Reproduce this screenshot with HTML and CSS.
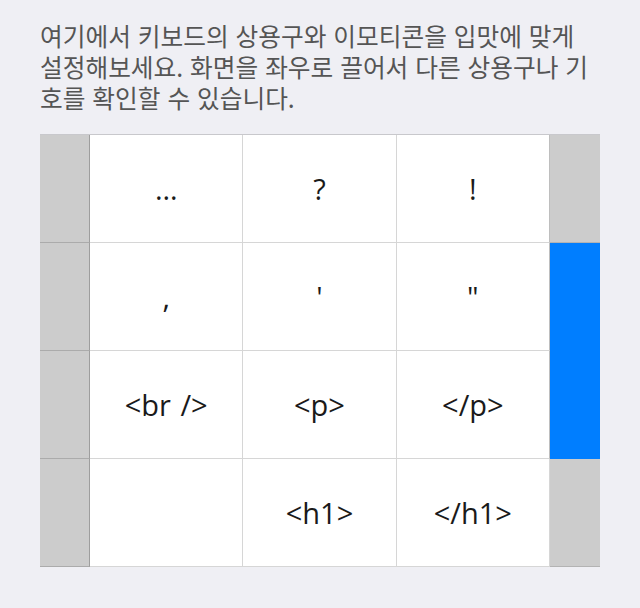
FILE: index.html
```html
<!DOCTYPE html>
<html lang="ko">
<head>
<meta charset="utf-8">
<link rel="stylesheet" href="styles.css">
</head>
<body>
<main class="page">
  <p class="intro">여기에서 키보드의 상용구와 이모티콘을 입맛에 맞게 설정해보세요. 화면을 좌우로 끌어서 다른 상용구나 기호를 확인할 수 있습니다.</p>
  <div class="board">
    <div class="cell side r1"></div>
    <div class="cell key">…</div>
    <div class="cell key">?</div>
    <div class="cell key">!</div>
    <div class="bar gray r1"></div>

    <div class="cell side r2"></div>
    <div class="cell key">,</div>
    <div class="cell key">'</div>
    <div class="cell key">"</div>
    <div class="bar blue"></div>

    <div class="cell side r3"></div>
    <div class="cell key">&lt;br /&gt;</div>
    <div class="cell key">&lt;p&gt;</div>
    <div class="cell key">&lt;/p&gt;</div>

    <div class="cell side r4"></div>
    <div class="cell key"></div>
    <div class="cell key">&lt;h1&gt;</div>
    <div class="cell key">&lt;/h1&gt;</div>
    <div class="bar gray r4"></div>
  </div>
</main>
</body>
</html>
```

FILE: styles.css
```css
* { box-sizing: border-box; }
html, body {
  margin: 0;
  padding: 0;
  background: #efeff4;
}
.page {
  padding: 20px 40px 0 40px;
}
.intro {
  margin: 0 8px 21px 0;
  font-family: "Noto Sans CJK KR", "Noto Sans", sans-serif;
  font-size: 24.7px;
  line-height: 31px;
  color: #555555;
}
.board {
  display: grid;
  grid-template-columns: 50px 1fr 1fr 1fr 50px;
  grid-template-rows: repeat(4, 108px);
  border-top: 1px solid rgba(0, 0, 0, 0.16);
}
.cell {
  border-right: 1px solid rgba(0, 0, 0, 0.16);
  border-bottom: 1px solid rgba(0, 0, 0, 0.16);
}
.side {
  background: #cccccc;
  border-right-color: rgba(0, 0, 0, 0.22);
}
.key {
  background: #ffffff;
  display: flex;
  align-items: center;
  justify-content: center;
  font-family: "Open Sans", "Noto Sans", sans-serif;
  font-size: 29px;
  color: #1a1a1a;
  word-spacing: 2px;
}
.key:nth-child(5n+4) {
  border-right-color: rgba(0, 0, 0, 0.25);
}
.bar {
  grid-column: 5;
  border-bottom: 1px solid rgba(0, 0, 0, 0.12);
}
.gray { background: #cccccc; }
.blue {
  background: #007eff;
  grid-row: 2 / span 2;
  border-bottom: none;
}
.r1 { grid-row: 1; }
.r4 { grid-row: 4; }
```
